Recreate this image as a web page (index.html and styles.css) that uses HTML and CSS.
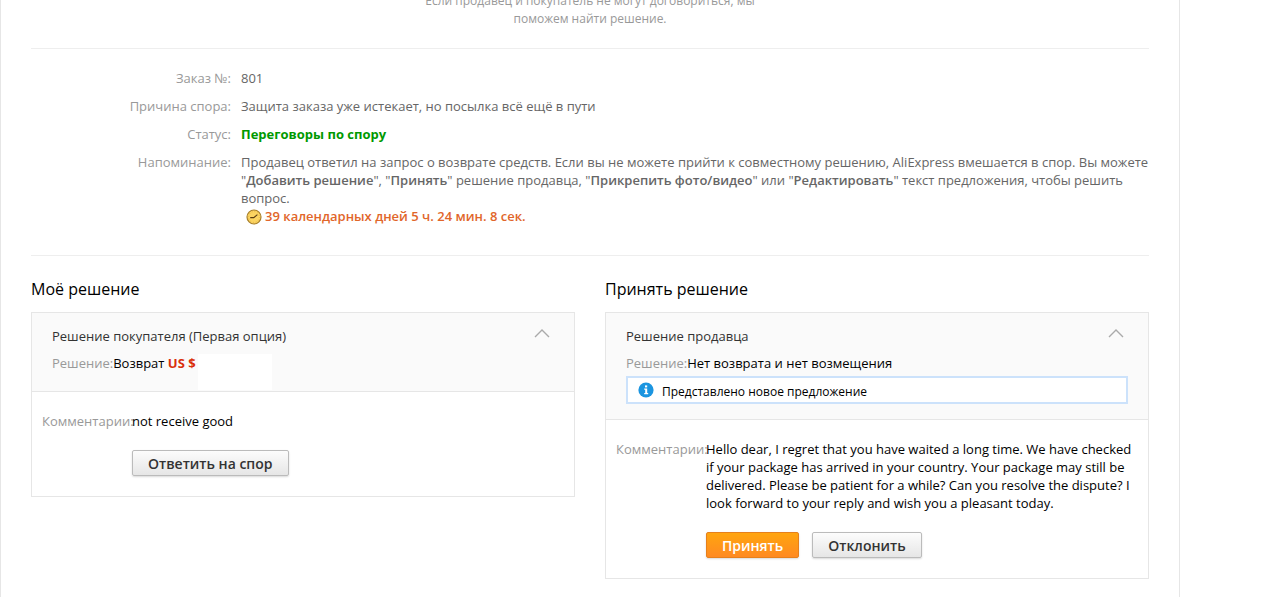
FILE: index.html
```html
<!DOCTYPE html>
<html lang="ru">
<head>
    <meta charset="UTF-8">
    <meta name="viewport" content="width=device-width, initial-scale=1.0">
    <title>Детали спора</title>
    <link rel="stylesheet" href="styles.css">
</head>
<body>
<main class="page">
    <p class="step-hint">Если продавец и покупатель не могут договориться, мы поможем найти решение.</p>

    <dl class="dispute-info">
        <dt>Заказ №:</dt>
        <dd>801</dd>
        <dt>Причина спора:</dt>
        <dd>Защита заказа уже истекает, но посылка всё ещё в пути</dd>
        <dt>Статус:</dt>
        <dd class="status">Переговоры по спору</dd>
        <dt>Напоминание:</dt>
        <dd>
            Продавец ответил на запрос о возврате средств. Если вы не можете прийти к совместному решению, AliExpress вмешается в спор. Вы можете "<b>Добавить решение</b>", "<b>Принять</b>" решение продавца, "<b>Прикрепить фото/видео</b>" или "<b>Редактировать</b>" текст предложения, чтобы решить вопрос.
            <div class="countdown">
                <svg class="clock-icon" viewBox="0 0 16 16" aria-hidden="true">
                    <circle cx="8" cy="8" r="7" fill="#fbd462" stroke="#a8802c" stroke-width="1.2"/>
                    <circle cx="8" cy="8" r="5.4" fill="none" stroke="#e9b53c" stroke-width="1" stroke-dasharray="1 1.8"/>
                    <path d="M4.2 8.6h3.6l3.6-3" fill="none" stroke="#5a3d12" stroke-width="1.1"/>
                </svg>
                <span>39 календарных дней 5 ч. 24 мин. 8 сек.</span>
            </div>
        </dd>
    </dl>

    <div class="solutions">
        <section>
            <h2>Моё решение</h2>
            <div class="card">
                <div class="card-header">
                    <div class="card-title">
                        <h3>Решение покупателя (Первая опция)</h3>
                        <button class="toggle" type="button" aria-label="Свернуть">
                            <svg viewBox="0 0 16 9" aria-hidden="true"><path d="M1 8l7-7 7 7"/></svg>
                        </button>
                    </div>
                    <div class="solution">
                        <span class="label">Решение:</span>
                        <span>Возврат <b class="price">US $</b></span>
                        <span class="amount"></span>
                    </div>
                </div>
                <div class="card-body">
                    <span class="label">Комментарии:</span>
                    <div class="comment">
                        <p>not receive good</p>
                        <div class="actions">
                            <button class="btn" type="button">Ответить на спор</button>
                        </div>
                    </div>
                </div>
            </div>
        </section>

        <section>
            <h2>Принять решение</h2>
            <div class="card">
                <div class="card-header">
                    <div class="card-title">
                        <h3>Решение продавца</h3>
                        <button class="toggle" type="button" aria-label="Свернуть">
                            <svg viewBox="0 0 16 9" aria-hidden="true"><path d="M1 8l7-7 7 7"/></svg>
                        </button>
                    </div>
                    <div class="solution">
                        <span class="label">Решение:</span>
                        <span>Нет возврата и нет возмещения</span>
                    </div>
                    <div class="notice">
                        <svg class="info-icon" viewBox="0 0 16 16" aria-hidden="true">
                            <circle cx="8" cy="8" r="7.6" fill="#1b95e0"/>
                            <rect x="7" y="3.4" width="2.2" height="2" fill="#fff"/>
                            <path d="M6.2 6.6h3v4.4h1v1.2H6.2V11h1V7.8h-1z" fill="#fff"/>
                        </svg>
                        <span>Представлено новое предложение</span>
                    </div>
                </div>
                <div class="card-body">
                    <span class="label">Комментарии:</span>
                    <div class="comment">
                        <p>Hello dear, I regret that you have waited a long time. We have checked if your package has arrived in your country. Your package may still be delivered. Please be patient for a while? Can you resolve the dispute? I look forward to your reply and wish you a pleasant today.</p>
                        <div class="actions">
                            <button class="btn btn-primary" type="button">Принять</button>
                            <button class="btn" type="button">Отклонить</button>
                        </div>
                    </div>
                </div>
            </div>
        </section>
    </div>
</main>
</body>
</html>
```
FILE: styles.css
```css
* {
    margin: 0;
    padding: 0;
    box-sizing: border-box;
}

body {
    font-family: 'Open Sans', sans-serif;
    font-size: 13px;
    line-height: 18px;
    color: #000;
    background-color: #fff;
    overflow: hidden;
}

b {
    font-weight: 600;
}

.page {
    max-width: 1180px;
    min-height: calc(100vh + 8px);
    margin-top: -8px;
    padding: 0 30px 20px;
    border-left: 1px solid #e6e6e6;
    border-right: 1px solid #e6e6e6;
}

.step-hint {
    max-width: 350px;
    margin: 0 auto;
    padding-bottom: 20px;
    font-size: 12px;
    text-align: center;
    color: #999;
}

.dispute-info {
    display: grid;
    grid-template-columns: 200px 1fr;
    gap: 10px;
    padding: 20px 0 30px;
    border-top: 1px solid #eee;
    border-bottom: 1px solid #eee;
    color: #666;
}

.dispute-info dt {
    text-align: right;
    color: #999;
}

.dispute-info .status {
    font-weight: bold;
    color: #090;
}

.countdown {
    display: flex;
    align-items: flex-end;
    gap: 3px;
    padding-left: 5px;
    font-weight: 600;
    color: #e1662a;
}

.clock-icon {
    width: 16px;
    height: 16px;
}

.solutions {
    display: grid;
    grid-template-columns: 1fr 1fr;
    align-items: start;
    gap: 30px;
    padding-top: 20px;
}

h2 {
    margin-bottom: 10px;
    font-size: 16px;
    font-weight: normal;
    line-height: 26px;
}

.card {
    border: 1px solid #e6e6e6;
}

.card-header {
    padding: 14px 20px 15px;
    background-color: #fafafa;
    border-bottom: 1px solid #e6e6e6;
}

.card-title {
    display: flex;
    justify-content: space-between;
    margin-bottom: 9px;
}

h3 {
    font-size: 13px;
    font-weight: normal;
    color: #333;
}

.toggle {
    width: 24px;
    height: 12px;
    border: none;
    background: none;
    cursor: pointer;
}

.toggle svg {
    display: block;
    width: 16px;
    height: 9px;
    margin: auto;
    fill: none;
    stroke: #aaa;
    stroke-width: 1.4;
}

.solution {
    display: flex;
    height: 18px;
    margin-bottom: 4px;
}

.label {
    flex-shrink: 0;
    color: #999;
}

.price {
    font-weight: bold;
    color: #d9300a;
}

.amount {
    width: 74px;
    height: 36px;
    margin-left: 2px;
    background-color: #fff;
}

.notice {
    display: flex;
    align-items: center;
    gap: 8px;
    height: 28px;
    padding: 0 10px;
    background-color: #fff;
    border: 2px solid #cce2fb;
    font-size: 12px;
}

.notice span {
    padding-top: 3px;
}

.info-icon {
    width: 16px;
    height: 16px;
}

.card-body {
    display: flex;
    padding: 20px 10px;
}

.card-body .label {
    width: 90px;
}

.comment {
    flex: 1;
}

.actions {
    display: flex;
    gap: 13px;
    margin-top: 20px;
}

.btn {
    height: 26px;
    padding: 0 15px;
    border: 1px solid #bbb;
    border-radius: 2px;
    background: linear-gradient(#fcfcfc, #e6e6e6);
    box-shadow: 0 1px 2px rgba(0, 0, 0, 0.15);
    font-family: inherit;
    font-size: 14px;
    font-weight: 600;
    color: #333;
    cursor: pointer;
}

.btn-primary {
    border-color: #e6801c;
    background: linear-gradient(#ffa50f, #ff8a22);
    color: #fff;
}
```
